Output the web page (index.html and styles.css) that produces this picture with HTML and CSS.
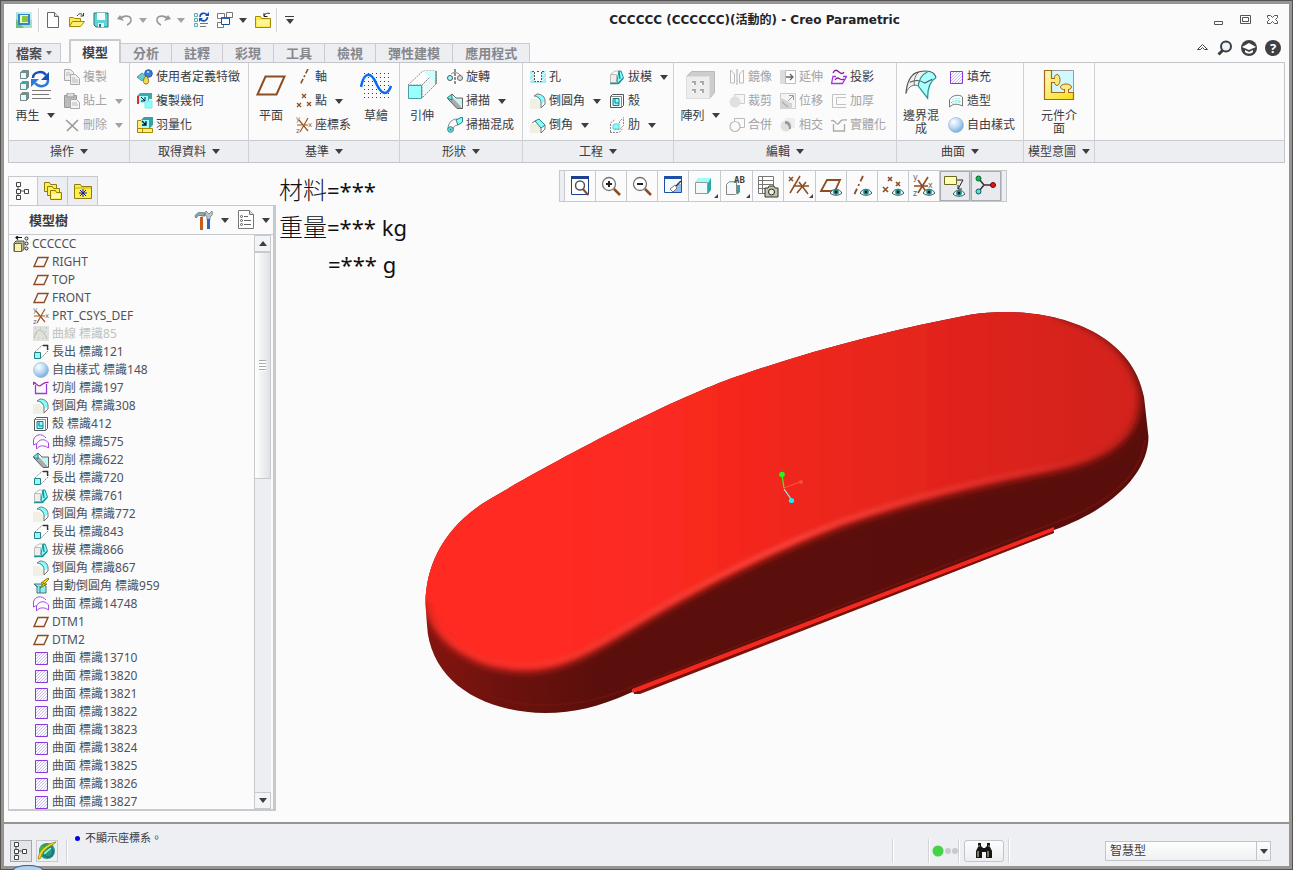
FILE: index.html
```html
<!DOCTYPE html>
<html lang="zh-Hant">
<head>
<meta charset="utf-8">
<title>CCCCCC - Creo Parametric</title>
<link rel="stylesheet" href="styles.css">
</head>
<body>
<svg class="defs" aria-hidden="true">
<defs>
<linearGradient id="gYellow" x1="0" y1="0" x2="1" y2="1"><stop offset="0" stop-color="#fff8c0"/><stop offset="1" stop-color="#f7de10"/></linearGradient>
<radialGradient id="gBall" cx=".35" cy=".3" r=".8"><stop offset="0" stop-color="#fff"/><stop offset=".5" stop-color="#b9d8f5"/><stop offset="1" stop-color="#6c9fd4"/></radialGradient>
<pattern id="hatch" width="3" height="3" patternUnits="userSpaceOnUse"><path d="M-1 1L1-1M0 3L3 0M2 4L4 2" stroke="#a9a4ee" stroke-width=".7"/></pattern>
<pattern id="dots" width="4" height="4" patternUnits="userSpaceOnUse"><rect width="1" height="1" fill="#1d3f90"/></pattern>

<symbol id="app" viewBox="0 0 18 18"><rect x="1" y="1" width="16" height="16" fill="#a8dccb"/><path d="M1 1h16v8z" fill="#c9ecf4"/><path d="M1 8v9h8z" fill="#74c26a"/><rect x="3" y="3" width="12" height="11" fill="#2f86c8"/><rect x="5" y="4" width="8" height="8" fill="#e8f8d0"/><rect x="7" y="5" width="6" height="6" fill="#8cc63c"/></symbol>
<symbol id="new" viewBox="0 0 16 16"><path d="M2.500.500h7l4 4v11h-11z" fill="#fff" stroke="#666"/><path d="M9.500.500v4h4" fill="#ddd" stroke="#666"/></symbol>
<symbol id="open" viewBox="0 0 16 16"><path d="M.500 14.500v-9h4l1 1h6v3" fill="#ffe94d" stroke="#a58a00"/><path d="M.500 14.500l3-5h12l-4 5z" fill="#fff27a" stroke="#a58a00"/><path d="M8 4c2-3 4-3 6-.500M11.500 4h3V1" fill="none" stroke="#333"/></symbol>
<symbol id="save" viewBox="0 0 16 16"><path d="M1 1h14v14H3l-2-2z" fill="#5cd5da" stroke="#26767c"/><path d="M4 1h8v7H4z" fill="#f8fcfc"/><path d="M5 11h6v4H5z" fill="#f2f2f2"/><path d="M6 12h2v3H6z" fill="#26767c"/></symbol>
<symbol id="undo" viewBox="0 0 16 16"><path d="M3 7c3-4 11-4 11 1 0 3-2 4-4 5" fill="none" stroke="#999" stroke-width="1.600"/><path d="M0 7l7 2-4-6z" fill="#999"/></symbol>
<symbol id="redo" viewBox="0 0 16 16"><path d="M13 7C10 3 2 3 2 8c0 3 2 4 4 5" fill="none" stroke="#999" stroke-width="1.600"/><path d="M16 7L9 9l4-6z" fill="#999"/></symbol>
<symbol id="regen16" viewBox="0 0 16 16"><path d="M1.500 1.500h3v3h-3zM1.500 6.500h3v3h-3zM1.500 11.500h3v3h-3z" fill="#cff" stroke="#6aa"/><path d="M7 5c0-4 5-5 7-2M14.500 5c0 4-5 5-7 2.500" fill="none" stroke="#1450b8" stroke-width="1.600"/><path d="M16 0v4h-4zM6 10V6h4z" fill="#1450b8"/><path d="M7 11.500h8M7 14.500h6" stroke="#777"/></symbol>
<symbol id="regen" viewBox="0 0 32 32"><g fill="#9ff" stroke="#777" stroke-width=".8"><path d="M1.500 3.500l2-2h6v6l-2 2h-6z" fill="#3aa"/><path d="M1.500 3.500h6v6h-6z" fill="#dff"/><path d="M1.500 14.500l2-2h6v6l-2 2h-6z" fill="#3aa"/><path d="M1.500 14.500h6v6h-6z" fill="#dff"/><path d="M1.500 25.500l2-2h6v6l-2 2h-6z" fill="#3aa"/><path d="M1.500 25.500h6v6h-6z" fill="#dff"/></g><path d="M14 9c0-6 9-8 13-3" fill="none" stroke="#1450b8" stroke-width="2.500"/><path d="M30 3v8h-8z" fill="#1450b8"/><path d="M29 11c0 7-9 8-13 3" fill="none" stroke="#2e78d8" stroke-width="2.500"/><path d="M12 18v-8h8z" fill="#2e78d8"/><path d="M13 21.500h19M13 25.500h17M13 29.500h19" stroke="#777"/></symbol>
<symbol id="wins" viewBox="0 0 16 16"><g fill="#fff" stroke="#777"><path d="M.500 1.500h7v5h-7zM9.500.500h6v5h-6zM.500 10.500h6v5h-6z"/></g><path d="M4.500 5.500h8v7h-8z" fill="#fff" stroke="#1c4a9a"/><path d="M4 5h9v2H4z" fill="#2b62b8"/></symbol>
<symbol id="closef" viewBox="0 0 16 16"><path d="M.500 15.500v-11h5l1 2h9v9z" fill="#fbea4c" stroke="#a58a00"/><path d="M2 8h12v6H2z" fill="#fff598"/><path d="M9 4c1-3 4-3 6-2.500M9 1v3.500h3.500" fill="none" stroke="#222"/></symbol>

<symbol id="copy" viewBox="0 0 16 16"><g fill="#eee" stroke="#aaa"><path d="M.500.500h6l3 3v8h-9z"/><path d="M6.500 5.500h5l4 4v6h-9z"/></g><path d="M2 4h4M2 6h4M8 9h3M8 11h6M8 13h6" stroke="#bbb"/></symbol>
<symbol id="paste" viewBox="0 0 16 16"><path d="M.500 2.500h12v12H.500z" fill="#bbb" stroke="#999"/><path d="M3 0h7v4H3z" fill="#ddd" stroke="#999"/><path d="M6.500 6.500h6l3 3v6h-9z" fill="#f4f4f4" stroke="#aaa"/><path d="M8 10h5M8 12h6" stroke="#bbb"/></symbol>
<symbol id="del" viewBox="0 0 16 16"><path d="M2 3l12 11M14 3L3 14" stroke="#999" stroke-width="1.600"/></symbol>
<symbol id="udf" viewBox="0 0 16 16"><path d="M0 8l5-4 4 3-4 5z" fill="#6cc" stroke="#287f82" stroke-width=".7"/><circle cx="11.500" cy="4.500" r="3.800" fill="#3c7ee0" stroke="#2457a6"/><path d="M9 7c4 4 3 8 0 8s-4-4 0-8z" fill="#f4d84c" stroke="#8f7414"/><circle cx="11" cy="3" r="1" fill="#cfe4ff"/></symbol>
<symbol id="copyg" viewBox="0 0 16 16"><path d="M0 3l3-3h12v6h-3v6H9V4z" fill="#38aab0"/><path d="M2 3h9v7H2z" fill="#9ff"/><path d="M0 3h2v8H0z" fill="#d03030"/><path d="M4 4l4 4m0-4v4H4" fill="none" stroke="#113"/><path d="M8 8h7v7H8z" fill="#8ff" stroke="#9adfe4"/></symbol>
<symbol id="shrink" viewBox="0 0 16 16"><path d="M.500 3.500h5v12h-5zM.500 11.500h15v4H.500z" fill="#ffec7a" stroke="#a58a00"/><path d="M4 3l3-3h9v8l-3 3H4z" fill="#38a0a5"/><path d="M4 3h8v8H4z" fill="#9ff"/><path d="M5 4l4 4m0-4v4H5" fill="none" stroke="#113" stroke-width="1.300"/></symbol>
<symbol id="plane" viewBox="0 0 16 16"><path d="M5 3.500h10l-4 9H1z" fill="none" stroke="#8d4c22" stroke-width="1.400"/></symbol>
<symbol id="plane32" viewBox="0 0 32 32"><path d="M10.500 7.500h19l-8 18h-19z" fill="none" stroke="#8d4c22" stroke-width="2"/></symbol>
<symbol id="axis" viewBox="0 0 16 16"><path d="M12 0L4 16" stroke="#8d4c22" stroke-width="1.600" stroke-dasharray="5 2 2 2"/></symbol>
<symbol id="pts" viewBox="0 0 16 16"><path d="M6 1l4 4m0-4L6 5M1 10l4 4m0-4l-4 4M11 9l4 4m0-4l-4 4" stroke="#8d4c22" stroke-width="1.200"/></symbol>
<symbol id="csys" viewBox="0 0 16 16"><path d="M1 8h11M3 3l9 11M12 1L4 15" stroke="#a3541f" stroke-width="1.200"/><text class="axisname" x="0" y="4">y</text><text class="axisname" x="12" y="10">x</text><text class="axisname" x="0" y="16">z</text></symbol>
<symbol id="sketch" viewBox="0 0 32 32"><rect x="2" y="2" width="28" height="28" fill="url(#dots)"/><path d="M1 18C4 2 11 3 16 14S27 28 31 17" fill="none" stroke="#0a6cf0" stroke-width="2.500"/></symbol>
<symbol id="extr" viewBox="0 0 32 32"><path d="M2 16L17 2h13L16 16z" fill="#fff" stroke="#888" stroke-dasharray="2 1"/><path d="M30 2v13L16 29V16z" fill="#eef8f8" stroke="#888" stroke-dasharray="2 1"/><path d="M17 2h13v13l-6-6z" fill="#cff"/><path d="M30 2v13" stroke="#555"/><path d="M2.500 16.500h13v13h-13z" fill="#9ff" stroke="#4d9ea0"/></symbol>
<symbol id="extr16" viewBox="0 0 16 16"><path d="M2 8l7-6.500h6V7l-7 7" fill="#fff" stroke="#888" stroke-dasharray="2 1"/><path d="M10 1.500h4.500V6" fill="none" stroke="#333" stroke-width="1.300"/><path d="M1.500 8.500h6v6h-6z" fill="#8ff" stroke="#287f82"/></symbol>
<symbol id="revolve" viewBox="0 0 16 16"><path d="M8 0v16" stroke="#222" stroke-dasharray="3 1"/><circle cx="3" cy="9" r="2.500" fill="#9ff" stroke="#555"/><circle cx="13" cy="9" r="2.500" fill="#dcdcdc" stroke="#666"/><path d="M4 5c2-2 7-2 9 1" fill="none" stroke="#888"/></symbol>
<symbol id="sweep" viewBox="0 0 16 16"><path d="M7 5h8.500v9L12 15z" fill="#c4f4f4"/><path d="M2 7l8 8.500h5.500L6 5z" fill="#aaa"/><path d="M0 5l5-4v6z" fill="#6ee" stroke="#287f82"/><path d="M5 1l4 4h6.500v10.500H10L1 6" fill="none" stroke="#555" stroke-width=".9"/></symbol>
<symbol id="swblend" viewBox="0 0 16 16"><path d="M1 12c0-6 4-10 9-10M6 13c0-3 2-5 5-5" fill="none" stroke="#888"/><circle cx="3.500" cy="12.500" r="2.800" fill="#6ee" stroke="#287f82"/><circle cx="3.500" cy="12.500" r="1" fill="#287f82"/><path d="M9 3l5-2.500h1.500V5L11 8z" fill="#8ff" stroke="#287f82"/></symbol>
<symbol id="hole" viewBox="0 0 16 16"><path d="M0 2h4v11h8V2h4v12H0z" fill="#a6ecf2"/><path d="M0 7l4-4M0 12l5-5M12 12l4-4M12 7l4-4" stroke="#fff"/><path d="M2 2.500h2.500v10h7v-10H14M7 2.500h2" fill="none" stroke="#555" stroke-dasharray="2 1"/></symbol>
<symbol id="round" viewBox="0 0 16 16"><path d="M0 6h7l4 5v5H0z" fill="#f0f0e2"/><path d="M4 3l4-2c4 0 7 3 7 7l-4 3c0-4-3-7-7-8z" fill="#8ff"/><path d="M4 3c4 0 7 3 7 7v5l4-4V8c0-4-3-7-8-7z" fill="none" stroke="#777"/></symbol>
<symbol id="chamf" viewBox="0 0 16 16"><path d="M0 7h6l5 4v5H0z" fill="#f0f0e2"/><path d="M5 4l4-2 6 6-4 3z" fill="#8ff" stroke="#287f82"/><path d="M2 6l3-2M11 11v5l4-4V8" fill="none" stroke="#777"/></symbol>
<symbol id="draft" viewBox="0 0 16 16"><path d="M1.500 5.500h6v8h-6z" fill="#eee" stroke="#bbb"/><path d="M2 5l4-3h4" fill="none" stroke="#bbb"/><path d="M8 12l2-10h2l2.500 7-5 6z" fill="#8ff" stroke="#209296"/><path d="M1 14.500h8l5-5M10 2l1 8" stroke="#209296" stroke-width="1.400" fill="none"/></symbol>
<symbol id="shell" viewBox="0 0 16 16"><path d="M1.500 3.500l2-2h11v11l-2 2h-11z" fill="#fff" stroke="#555"/><path d="M1.500 3.500h11v11" fill="none" stroke="#888"/><path d="M4 5.500h6v7H4z" fill="#8ff" stroke="#167b7e"/><path d="M6 6v4h4" fill="none" stroke="#167b7e"/></symbol>
<symbol id="rib" viewBox="0 0 16 16"><path d="M1.500 15V6l4-3M5.500 12.500h5l4-4V.500l-4 4v3M1 15.500h9l4-4" fill="none" stroke="#888" stroke-dasharray="2 1"/><path d="M4 8l2-1h4v5H4z" fill="#8ff" stroke="#6cc"/></symbol>
<symbol id="pattern" viewBox="0 0 32 32"><path d="M2.500 7.500l5-5h23v21l-5 6h-23z" fill="#cdcdcd" stroke="#b8b8b8"/><path d="M2.500 7.500h23v22h-23z" fill="#ededed" stroke="#ddd"/><g fill="#aaa"><path d="M8 12h4v4H8zM16 12h4v4h-4zM8 20h4v4H8zM16 20h4v4h-4z"/></g><g fill="#fff"><path d="M8 14h2v2H8zM16 14h2v2h-2zM8 22h2v2H8zM16 22h2v2h-2z"/></g></symbol>
<symbol id="mirror" viewBox="0 0 16 16"><path d="M8 0v16" stroke="#aaa"/><path d="M5.500 5v9h-4V1zM10.500 5v9h4V1z" fill="none" stroke="#bbb"/></symbol>
<symbol id="extend" viewBox="0 0 16 16"><path d="M0 1h6v14H0z" fill="#ddd"/><path d="M5.500 1.500h10v13h-10z" fill="#fff" stroke="#bbb"/><path d="M6 8h7M10 5l3 3-3 3" fill="none" stroke="#666" stroke-width="1.300"/></symbol>
<symbol id="project" viewBox="0 0 16 16"><path d="M2 4c2-4 4-3 6-1s4 2 5 0" fill="none" stroke="#8a1f9a" stroke-width="1.300"/><path d="M4 11c2-3 3-2 5-1s3 1 4 0" fill="none" stroke="#8a1f9a" stroke-width="1.300"/><path d="M5 7.500H2l-1.500 7h11l4-7H12" fill="none" stroke="#a038e8" stroke-width="1.300"/></symbol>
<symbol id="trim" viewBox="0 0 16 16"><path d="M5.500 1.500h10v9h-10z" fill="#f6f6f6" stroke="#ccc"/><circle cx="6" cy="9" r="5.500" fill="#e0e0e0"/></symbol>
<symbol id="offset" viewBox="0 0 16 16"><path d="M.500.500h15v15H.500z" fill="#f4f4f4" stroke="#ccc"/><path d="M0 6c5-2 6 4 12 4v6H0z" fill="#d4d4d4"/><path d="M8 8l5-5M9 2.500h4.500V7M2 9l6 5" stroke="#999" fill="none"/></symbol>
<symbol id="thicken" viewBox="0 0 16 16"><path d="M15 1.500H1.500v13H15M15 4.500H5.500v7H15" fill="none" stroke="#c2c2c2"/></symbol>
<symbol id="merge" viewBox="0 0 16 16"><path d="M5.500 1.500h10v9h-5M5.500 1.500V4" fill="none" stroke="#bbb"/><circle cx="6" cy="9.500" r="5" fill="none" stroke="#bbb" stroke-width="1.200"/></symbol>
<symbol id="inter" viewBox="0 0 16 16"><path d="M5 1h10v10H5z" fill="#eee"/><circle cx="6" cy="9" r="5.500" fill="#e0e0e0"/><path d="M5 4c5 0 6 3 6 8H9c0-3-1-5-4-5z" fill="#999"/></symbol>
<symbol id="solid" viewBox="0 0 16 16"><path d="M2.500 7v7h11V7M0 4c4-3 5 6 8 2s4-3 8-3" fill="none" stroke="#aaa" stroke-width="1.300"/></symbol>
<symbol id="bblend" viewBox="0 0 34 34"><path d="M1 26C2 13 7 4 15 3l9-1c-8 3-11 12-7 15C10 14 4 17 1 26z" fill="#f0f0f0"/><path d="M24 3c5-1 8 1 9 6-7 4-9 12-9 22l-9-14c0-6 4-11 9-14z" fill="#aff"/><path d="M1 26C2 13 7 4 15 3c8-2 16-1 18 6M5 14c7-3 12-2 16 1l8-4" fill="none" stroke="#555" stroke-width="1.200"/><path d="M1 26c3-9 9-10 14-8M15 3c-4 3-6 9-5 15" fill="none" stroke="#666"/><path d="M33 9c-7 4-9 12-9 22L14 18C15 10 18 6 24 3" fill="none" stroke="#209296" stroke-width="1.300"/></symbol>
<symbol id="fill" viewBox="0 0 16 16"><path d="M2.500 2.500h12v12h-12z" fill="url(#hatch)" stroke="#8c38d8"/></symbol>
<symbol id="style" viewBox="0 0 16 16"><path d="M1.500 14V7c2-5 10-6 13-3v9c-4-2-9-3-13 1z" fill="#f4fefe" stroke="#777"/><path d="M5 6v6M8 5v6M11 5v6M3 10c4-3 7-2 10-1" stroke="#6fd6d8" stroke-dasharray="1 1" fill="none"/></symbol>
<symbol id="ball" viewBox="0 0 16 16"><circle cx="8" cy="8" r="7.500" fill="url(#gBall)" stroke="#9bb9d8" stroke-width=".7"/></symbol>
<symbol id="puzzle" viewBox="0 0 32 32"><path d="M8.500 1.500h22v22h-22z" fill="#cff8ff" stroke="#999"/><path d="M1.500 1.500h7v22h22v7h-29z" fill="url(#gYellow)" stroke="#a3681c" stroke-width="1.200"/><g fill="#fbe97a" stroke="#a3681c"><ellipse cx="14" cy="11" rx="3" ry="5.500"/><ellipse cx="23" cy="18" rx="5.500" ry="3"/><path d="M8 9.500h4M8 13.500h4M21.500 20v4M25.500 20v4"/></g><path d="M7 10h6v3H7zM22 18h3v7h-3z" fill="#fbe97a"/></symbol>

<symbol id="tree" viewBox="0 0 16 18"><path d="M3 5v8M5 9h5" stroke="#555"/><path d="M1.500.500h4v4h-4zM1.500 7.500h4v4h-4zM1.500 13.500h4v4h-4zM9.500 7.500h4v4h-4z" fill="#fff" stroke="#444"/></symbol>
<symbol id="folders" viewBox="0 0 18 18"><g fill="#fff04a" stroke="#8e7c10"><path d="M.500 9.500v-9h5l1 2h6v7z"/><path d="M3.500 13.500v-9h5l1 2h6v7z"/><path d="M6.500 17.500v-9h5l1 2h5v7z"/></g><path d="M8 12h8v4H8z" fill="#fffab0"/></symbol>
<symbol id="favf" viewBox="0 0 18 18"><path d="M.500 16.500v-14h6l1 2h10v12z" fill="#fdf04c" stroke="#8e7c10"/><path d="M1 6h16" stroke="#c8ae10"/><path d="M9 7v8M5 11h8M6 8l6 6M12 8l-6 6" stroke="#111aa8"/></symbol>
<symbol id="tools" viewBox="0 0 20 20"><path d="M1 6c2-4 5-4 10-3v3H8C5 5 4 5 2 8z" fill="#93a8ac" stroke="#495b60" stroke-width=".7"/><path d="M6 7h3v13H6z" fill="#c4601c"/><path d="M12 1l3 3 3-3c1 3 0 5-2 6v3h-3V7c-2-2-2-4-1-6z" fill="#b7c7ce" stroke="#5c7078" stroke-width=".7"/><path d="M13 9h3v10h-3z" fill="#2f66c8"/></symbol>
<symbol id="listset" viewBox="0 0 18 20"><path d="M1.500.500h11l4 4v14h-15z" fill="#fff" stroke="#777"/><path d="M12.500.500v4h4" fill="#ddd" stroke="#777"/><path d="M7 6.500h4M7 10.500h7M7 14.500h7" stroke="#666"/><g fill="none" stroke="#555"><circle cx="4.500" cy="6.500" r="1"/><circle cx="4.500" cy="10.500" r="1"/><circle cx="4.500" cy="14.500" r="1"/></g></symbol>
<symbol id="part" viewBox="0 0 16 16"><path d="M1 7l2-2h8v8l-2 2.500H1z" fill="#b9b98a" stroke="#555"/><path d="M1.500 7.500h7v8h-7z" fill="#f7f2b4" stroke="#6b6b40"/><path d="M9 1.500H3M5 0L3 1.500l2 2" stroke="#111" fill="none" stroke-width="1.200"/><g fill="none" stroke="#222"><circle cx="13.500" cy="2.500" r="1.500"/><circle cx="13.500" cy="7.500" r="1.500"/><circle cx="13.500" cy="12.500" r="1.500"/></g></symbol>
<symbol id="curve" viewBox="0 0 16 16"><path d="M0 0h16v15H0z" fill="#e0e0e0"/><path d="M1 12C4 0 10 3 14 13" stroke="#b5bd9c" fill="none"/><path d="M2 2h1M7 2h1M13 2h1M3 7h1M12 6h1M5 12h1M10 12h1" stroke="#aebf8c"/></symbol>
<symbol id="cut" viewBox="0 0 16 16"><path d="M.500 5V2.500c3 0 4 5 7 3s4-4 8-3" fill="none" stroke="#b020a8" stroke-width="1.300"/><path d="M2.500 5v8.500h11V4" fill="none" stroke="#963ce0" stroke-width="1.300"/></symbol>
<symbol id="surf" viewBox="0 0 16 16"><path d="M.500 11V6C2 0 9-1 13 4M.500 11l3-1.500M3.500 15v-5C6 5 12 4 15.500 9v5c-4-3-9-3-12 1z" fill="none" stroke="#a848ea"/></symbol>
<symbol id="auto" viewBox="0 0 16 16"><path d="M1 6h7l5 2v7H4V9z" fill="#8ee" stroke="#48777a"/><path d="M7 8v7M1 6l4 3" stroke="#48777a"/><path d="M15 0L8 5h3L7 10l7-4h-3l5-5z" fill="#ffea00" stroke="#665c00" stroke-width=".8"/></symbol>
<symbol id="web" viewBox="0 0 20 20"><circle cx="10" cy="10" r="8" fill="#2b9a6c"/><path d="M4 5c4 0 8 2 5 6-3 0-3 6-5 3-3-3-2-6 0-9z" fill="#39b852"/><circle cx="11" cy="11" r="5" fill="none" stroke="#1a6ea0" stroke-width="2"/><path d="M1 18C2 9 9 3 19 1 17 4 14 4 12 6 7 8 5 13 3 18z" fill="#f4dc20" stroke="#8a7a10" stroke-width=".7"/><path d="M7 13l7-6" stroke="#9fe" stroke-width="1.500"/></symbol>
<symbol id="eye" viewBox="0 0 12 8"><path d="M0 5c3-5 9-5 12 0-3 3-9 3-12 0z" fill="#e9f5f5" stroke="#34575a"/><circle cx="6" cy="4" r="2.800" fill="#178c88"/><circle cx="6" cy="4" r="1.200" fill="#113"/></symbol>

<linearGradient id="face" gradientUnits="userSpaceOnUse" x1="560" y1="480" x2="1110" y2="480"><stop offset="0" stop-color="#ff2c24"/><stop offset=".25" stop-color="#f8291f"/><stop offset=".5" stop-color="#ec261d"/><stop offset=".75" stop-color="#df241c"/><stop offset="1" stop-color="#d4211a"/></linearGradient>
<linearGradient id="side" gradientUnits="userSpaceOnUse" x1="425" y1="0" x2="1150" y2="0"><stop offset="0" stop-color="#84150f"/><stop offset=".1" stop-color="#6e120e"/><stop offset=".24" stop-color="#5a0f0c"/><stop offset="1" stop-color="#5a0e0b"/></linearGradient>
<linearGradient id="rim" gradientUnits="userSpaceOnUse" x1="425" y1="0" x2="1150" y2="0"><stop offset="0" stop-color="#ff4038" stop-opacity=".3"/><stop offset=".5" stop-color="#ff463e"/><stop offset=".85" stop-color="#e2302a" stop-opacity=".8"/><stop offset="1" stop-color="#d8241c" stop-opacity="0"/></linearGradient>
<filter id="soft" x="-5%" y="-5%" width="110%" height="110%"><feGaussianBlur stdDeviation="4"/></filter>
<filter id="soft2" x="-5%" y="-5%" width="110%" height="110%"><feGaussianBlur stdDeviation="2"/></filter>
<clipPath id="hull"><path d="M425.500 604C425.500 562 447 524 490 499C580 446 690 391 747 373C820 348 900 328 970 314.700C1040 304 1130 325 1144 397L1148.500 437C1148 475 1110 510 1054 530L630 693C598 707 575 713 545 713C480 712 430 680 427 625Z"/></clipPath>
</defs>
</svg>

<div class="window">
  <header class="titlebar">
    <div class="quick">
      <svg class="i18"><use href="#app"/></svg><span class="vsep"></span>
      <button class="qb" aria-label="新建"><svg class="i16"><use href="#new"/></svg></button>
      <button class="qb" aria-label="開啟"><svg class="i16"><use href="#open"/></svg></button>
      <button class="qb" aria-label="儲存"><svg class="i16"><use href="#save"/></svg></button>
      <button class="qb" aria-label="退回"><svg class="i16"><use href="#undo"/></svg><i class="caret dim"></i></button>
      <button class="qb" aria-label="取消退回"><svg class="i16"><use href="#redo"/></svg><i class="caret dim"></i></button>
      <button class="qb" aria-label="再生"><svg class="i16"><use href="#regen16"/></svg></button>
      <button class="qb" aria-label="視窗"><svg class="i16"><use href="#wins"/></svg><i class="caret"></i></button>
      <button class="qb" aria-label="關閉"><svg class="i16"><use href="#closef"/></svg></button><span class="vsep"></span>
      <button class="qb more" aria-label="自訂"><i class="caret"></i></button>
    </div>
    <h1>CCCCCC (CCCCCC)(活動的) - Creo Parametric</h1>
    <div class="winbtns">
      <button aria-label="最小化"><svg width="12" height="12"><path d="M1.500 7.500h8v3h-8z" fill="#fff" stroke="#555"/></svg></button>
      <button aria-label="最大化"><svg width="12" height="12"><path d="M.500 1.500h10v8H.500zM2.500 3.500h6v4h-6z" fill="#fff" stroke="#555"/></svg></button>
      <button aria-label="關閉視窗"><svg width="12" height="12"><path d="M.500 1.500h3l2 2 2-2h3v2l-2 2 2 2v2h-3l-2-2-2 2h-3v-2l2-2-2-2z" fill="#fff" stroke="#555"/></svg></button>
    </div>
  </header>

  <nav class="tabs">
    <button class="tab file">檔案<i class="caret"></i></button>
    <button class="tab active">模型</button>
    <button class="tab">分析</button><button class="tab">註釋</button><button class="tab">彩現</button><button class="tab">工具</button><button class="tab">檢視</button><button class="tab">彈性建模</button><button class="tab">應用程式</button>
    <div class="help">
      <button aria-label="收合"><svg width="12" height="12"><path d="M.500 7.500l5-5 5 5h-3l-2-2-2 2z" fill="#fff" stroke="#444"/></svg></button>
      <button aria-label="搜尋"><svg width="16" height="16"><circle cx="9" cy="6.500" r="5" fill="#eef4fa" stroke="#3c3e44" stroke-width="2"/><path d="M5.500 10.500L1.500 14.500" stroke="#3c3e44" stroke-width="3"/></svg></button>
      <button aria-label="學習"><svg width="16" height="16"><circle cx="8" cy="8" r="8" fill="#3f4045"/><path d="M1 7l7-4 7 4-7 3z" fill="#fff"/><path d="M4 10v2c2 2 6 2 8 0v-2l-4 2z" fill="#fff"/></svg></button>
      <button class="ask" aria-label="說明">?</button>
    </div>
  </nav>

  <section class="ribbon">
    <div class="group g-op">
      <div class="tools">
        <button class="big wide"><svg class="i32"><use href="#regen"/></svg><span>再生<i class="caret"></i></span></button>
        <div class="col"><button class="sm" disabled><svg class="i16"><use href="#copy"/></svg>複製</button><button class="sm" disabled><svg class="i16"><use href="#paste"/></svg>貼上<i class="caret"></i></button><button class="sm" disabled><svg class="i16"><use href="#del"/></svg>刪除<i class="caret"></i></button></div>
      </div>
      <button class="gname">操作<i class="caret"></i></button>
    </div>
    <div class="group g-data">
      <div class="tools inset">
        <div class="col"><button class="sm"><svg class="i16"><use href="#udf"/></svg>使用者定義特徵</button><button class="sm"><svg class="i16"><use href="#copyg"/></svg>複製幾何</button><button class="sm"><svg class="i16"><use href="#shrink"/></svg>羽量化</button></div>
      </div>
      <button class="gname">取得資料<i class="caret"></i></button>
    </div>
    <div class="group g-datum">
      <div class="tools">
        <button class="big"><svg class="i32"><use href="#plane32"/></svg><span>平面</span></button>
        <div class="col"><button class="sm"><svg class="i16"><use href="#axis"/></svg>軸</button><button class="sm"><svg class="i16"><use href="#pts"/></svg>點<i class="caret"></i></button><button class="sm"><svg class="i16"><use href="#csys"/></svg>座標系</button></div>
        <button class="big"><svg class="i32"><use href="#sketch"/></svg><span>草繪</span></button>
      </div>
      <button class="gname">基準<i class="caret"></i></button>
    </div>
    <div class="group g-shape">
      <div class="tools">
        <button class="big"><svg class="i32"><use href="#extr"/></svg><span>引伸</span></button>
        <div class="col"><button class="sm"><svg class="i16"><use href="#revolve"/></svg>旋轉</button><button class="sm"><svg class="i16"><use href="#sweep"/></svg>掃描<i class="caret"></i></button><button class="sm"><svg class="i16"><use href="#swblend"/></svg>掃描混成</button></div>
      </div>
      <button class="gname">形狀<i class="caret"></i></button>
    </div>
    <div class="group g-eng">
      <div class="tools inset">
        <div class="col"><button class="sm"><svg class="i16"><use href="#hole"/></svg>孔</button><button class="sm"><svg class="i16"><use href="#round"/></svg>倒圓角<i class="caret"></i></button><button class="sm"><svg class="i16"><use href="#chamf"/></svg>倒角<i class="caret"></i></button></div>
        <div class="col next"><button class="sm"><svg class="i16"><use href="#draft"/></svg>拔模<i class="caret"></i></button><button class="sm"><svg class="i16"><use href="#shell"/></svg>殼</button><button class="sm"><svg class="i16"><use href="#rib"/></svg>肋<i class="caret"></i></button></div>
      </div>
      <button class="gname">工程<i class="caret"></i></button>
    </div>
    <div class="group g-edit">
      <div class="tools">
        <button class="big wide"><svg class="i32"><use href="#pattern"/></svg><span>陣列<i class="caret"></i></span></button>
        <div class="col"><button class="sm" disabled><svg class="i16"><use href="#mirror"/></svg>鏡像</button><button class="sm" disabled><svg class="i16"><use href="#trim"/></svg>裁剪</button><button class="sm" disabled><svg class="i16"><use href="#merge"/></svg>合併</button></div>
        <div class="col next"><button class="sm" disabled><svg class="i16"><use href="#extend"/></svg>延伸</button><button class="sm" disabled><svg class="i16"><use href="#offset"/></svg>位移</button><button class="sm" disabled><svg class="i16"><use href="#inter"/></svg>相交</button></div>
        <div class="col next"><button class="sm"><svg class="i16"><use href="#project"/></svg>投影</button><button class="sm" disabled><svg class="i16"><use href="#thicken"/></svg>加厚</button><button class="sm" disabled><svg class="i16"><use href="#solid"/></svg>實體化</button></div>
      </div>
      <button class="gname">編輯<i class="caret"></i></button>
    </div>
    <div class="group g-surf">
      <div class="tools">
        <button class="big mid"><svg class="i32"><use href="#bblend"/></svg><span>邊界混<br>成</span></button>
        <div class="col"><button class="sm"><svg class="i16"><use href="#fill"/></svg>填充</button><button class="sm"><svg class="i16"><use href="#style"/></svg>造型</button><button class="sm"><svg class="i16"><use href="#ball"/></svg>自由樣式</button></div>
      </div>
      <button class="gname">曲面<i class="caret"></i></button>
    </div>
    <div class="group g-intent">
      <div class="tools center">
        <button class="big"><svg class="i32"><use href="#puzzle"/></svg><span>元件介<br>面</span></button>
      </div>
      <button class="gname">模型意圖<i class="caret"></i></button>
    </div>
    <div class="group rest"><div class="tools"></div><div class="gname"></div></div>
  </section>

  <main class="main">
    <aside class="side">
      <div class="sidetabs">
        <button class="active" aria-label="模型樹"><svg width="16" height="18"><use href="#tree"/></svg></button>
        <button aria-label="資料夾"><svg width="18" height="18"><use href="#folders"/></svg></button>
        <button aria-label="我的最愛"><svg width="18" height="18"><use href="#favf"/></svg></button>
      </div>
      <div class="panel">
        <div class="panelhead"><h2>模型樹</h2>
          <button aria-label="設定"><svg width="20" height="20"><use href="#tools"/></svg><i class="caret"></i></button>
          <button aria-label="顯示"><svg width="18" height="20"><use href="#listset"/></svg><i class="caret"></i></button>
        </div>
        <div class="treebox">
          <ul class="tree">
            <li class="root"><svg class="i16"><use href="#part"/></svg>CCCCCC</li>
            <li><svg class="i16"><use href="#plane"/></svg>RIGHT</li>
            <li><svg class="i16"><use href="#plane"/></svg>TOP</li>
            <li><svg class="i16"><use href="#plane"/></svg>FRONT</li>
            <li><svg class="i16"><use href="#csys"/></svg>PRT_CSYS_DEF</li>
            <li class="dimrow"><svg class="i16"><use href="#curve"/></svg>曲線 標識85</li>
            <li><svg class="i16"><use href="#extr16"/></svg>長出 標識121</li>
            <li><svg class="i16"><use href="#ball"/></svg>自由樣式 標識148</li>
            <li><svg class="i16"><use href="#cut"/></svg>切削 標識197</li>
            <li><svg class="i16"><use href="#round"/></svg>倒圓角 標識308</li>
            <li><svg class="i16"><use href="#shell"/></svg>殼 標識412</li>
            <li><svg class="i16"><use href="#surf"/></svg>曲線 標識575</li>
            <li><svg class="i16"><use href="#sweep"/></svg>切削 標識622</li>
            <li><svg class="i16"><use href="#extr16"/></svg>長出 標識720</li>
            <li><svg class="i16"><use href="#draft"/></svg>拔模 標識761</li>
            <li><svg class="i16"><use href="#round"/></svg>倒圓角 標識772</li>
            <li><svg class="i16"><use href="#extr16"/></svg>長出 標識843</li>
            <li><svg class="i16"><use href="#draft"/></svg>拔模 標識866</li>
            <li><svg class="i16"><use href="#round"/></svg>倒圓角 標識867</li>
            <li><svg class="i16"><use href="#auto"/></svg>自動倒圓角 標識959</li>
            <li><svg class="i16"><use href="#surf"/></svg>曲面 標識14748</li>
            <li><svg class="i16"><use href="#plane"/></svg>DTM1</li>
            <li><svg class="i16"><use href="#plane"/></svg>DTM2</li>
            <li><svg class="i16"><use href="#fill"/></svg>曲面 標識13710</li>
            <li><svg class="i16"><use href="#fill"/></svg>曲面 標識13820</li>
            <li><svg class="i16"><use href="#fill"/></svg>曲面 標識13821</li>
            <li><svg class="i16"><use href="#fill"/></svg>曲面 標識13822</li>
            <li><svg class="i16"><use href="#fill"/></svg>曲面 標識13823</li>
            <li><svg class="i16"><use href="#fill"/></svg>曲面 標識13824</li>
            <li><svg class="i16"><use href="#fill"/></svg>曲面 標識13825</li>
            <li><svg class="i16"><use href="#fill"/></svg>曲面 標識13826</li>
            <li><svg class="i16"><use href="#fill"/></svg>曲面 標識13827</li>
          </ul>
          <div class="scroll">
            <button aria-label="向上"><i class="caret up"></i></button>
            <div class="track"><div class="thumb"><i></i></div></div>
            <button aria-label="向下"><i class="caret"></i></button>
          </div>
        </div>
      </div>
    </aside>

    <section class="canvas">
      <div class="canvastop">
        <div class="notes"><p>材料<span>=***</span></p><p>重量<span>=*** kg</span></p><p class="ind"><span>=*** g</span></p></div>
        <div class="viewbar">
          <button aria-label="重新調整"><svg class="i30"><path d="M6.500 6.500h17v17h-17z" fill="#fff" stroke="#1d3f90"/><path d="M6 5h18v3H6z" fill="#1d3f90"/><circle cx="15" cy="14.500" r="4.500" fill="#fff" stroke="#555" stroke-width="1.500"/><path d="M18 18l5 6" stroke="#8d4c22" stroke-width="2"/></svg></button>
          <button aria-label="放大"><svg class="i30"><circle cx="13" cy="13" r="6.500" fill="#fff" stroke="#777" stroke-width="1.300"/><path d="M10 13h6M13 10v6" stroke="#222" stroke-width="2"/><path d="M18 18l6 6" stroke="#8d4c22" stroke-width="2.500"/></svg></button>
          <button aria-label="縮小"><svg class="i30"><circle cx="13" cy="13" r="6.500" fill="#fff" stroke="#777" stroke-width="1.300"/><path d="M10 13h6" stroke="#222" stroke-width="2"/><path d="M18 18l6 6" stroke="#8d4c22" stroke-width="2.500"/></svg></button>
          <button aria-label="重繪"><svg class="i30"><path d="M6.500 6.500h17v15h-17z" fill="#f4f9ff" stroke="#1d4fa8"/><path d="M6 5h18v3H6z" fill="#1d4fa8"/><path d="M14 21l6-8h3v8z" fill="#8fbcf0"/><path d="M12 18l5-4 2 3-4 4z" fill="#fff" stroke="#777"/><path d="M18 15l5-5" stroke="#333" stroke-width="1.500"/></svg></button>
          <button class="drop" aria-label="顯示樣式"><svg class="i30"><path d="M6 12l4-5h12v12l-3 4H6z" fill="#2ca6aa"/><path d="M6 12l4-5h12l-3 5z" fill="#9ff"/><path d="M6.500 11.500h12v11h-12z" fill="#f1fafa" stroke="#999"/></svg></button>
          <button class="drop" aria-label="已儲存方位"><svg class="i30"><path d="M5.500 13.500l3-3h7v12l-1 1h-9z" fill="#f8f8f8" stroke="#888"/><path d="M8 11h7" stroke="#5dd"/><path d="M16 14h3v7l-3 3z" fill="#2ca6aa"/><text x="13" y="12" class="ab">AB</text></svg></button>
          <button aria-label="視圖管理員"><svg class="i30"><path d="M5.500 5.500h15v17h-15zM5 9.500h16M5 13.500h16M5 17.500h9M9.500 6v17" fill="#fff" stroke="#777"/><path d="M12 17h3l1-2h5l1 2h3v9H12z" fill="#c6c4a6" stroke="#333"/><circle cx="18.500" cy="21" r="3" fill="#eee" stroke="#222"/></svg></button>
          <button class="drop" aria-label="基準顯示"><svg class="i30"><path d="M5 6l4 4m0-4l-4 4M16 5L6 22M9 15h16M13 22l9-11M15 11l9 12" stroke="#8d4c22" stroke-width="1.500"/></svg></button>
          <button aria-label="平面顯示"><svg class="i30"><path d="M11 9h13l-5 11H5z" fill="none" stroke="#8d4c22" stroke-width="1.800"/><use href="#eye" x="14" y="17" width="12" height="8"/></svg></button>
          <button aria-label="軸顯示"><svg class="i30"><path d="M16 5L7 24" stroke="#8d4c22" stroke-width="1.800" stroke-dasharray="6 3 2 3"/><use href="#eye" x="13" y="17" width="12" height="8"/></svg></button>
          <button aria-label="點顯示"><svg class="i30"><path d="M10 6l4 4m0-4l-4 4M5 16l5 5m0-5l-5 5M18 11l4 4m0-4l-4 4" stroke="#8d4c22" stroke-width="1.600"/><use href="#eye" x="14" y="17" width="12" height="8"/></svg></button>
          <button aria-label="座標系顯示"><svg class="i30"><path d="M5 15h14M9 9l9 13M19 6L9 22" stroke="#8d4c22" stroke-width="1.600"/><text class="axisname big" x="4" y="9">y</text><text class="axisname big" x="19" y="17">x</text><text class="axisname big" x="4" y="25">z</text><use href="#eye" x="14" y="17" width="12" height="8"/></svg></button>
          <button class="on" aria-label="註解顯示"><svg class="i30"><path d="M4.500 5.500h12v8h-12z" fill="#ffffb8" stroke="#6b6b20"/><path d="M17 9h6l-5 9M18 14v4h4" fill="none" stroke="#222"/><use href="#eye" x="13" y="18" width="12" height="8"/></svg></button>
          <button class="on" aria-label="旋轉中心"><svg class="i30"><path d="M8 8l5 6M13 14h9M13 14l-5 6" stroke="#333" stroke-width="1.500"/><circle cx="7.500" cy="7.500" r="2.500" fill="#1fb43c" stroke="#064"/><circle cx="22" cy="14" r="2.500" fill="#e01818" stroke="#700"/><circle cx="7.500" cy="20.500" r="2.500" fill="#50e0e8" stroke="#155"/></svg></button>
        </div>
      </div>
      <svg class="model" viewBox="276 281 1013 541" role="img" aria-label="3D 模型">
        <path d="M1053 526v7L640 693h-8z" fill="#5a0f0c"/>
        <g clip-path="url(#hull)">
          <path d="M400 290h760v440H400z" fill="url(#side)"/>
          <path d="M428 632C440 680 490 705 545 705C580 705 605 698 632 687L1054 523C1100 507 1140 482 1145 440" fill="none" stroke="#7c1610" stroke-width="2" opacity=".5"/>
          <path d="M380 600L426 604C432 643 475 671 525 671C570 671 600 647 667 609C720 579 780 550 840 527C900 506 970 488 1040 474C1105 462 1142 441 1140 393C1130 352 1104 331 1060 317L1000 280L500 300Z" fill="url(#face)" filter="url(#soft)"/>
          <path d="M427 606C434 638 475 666 525 666C570 666 600 642 667 604C720 574 780 545 840 522C900 501 970 483 1040 469C1105 457 1140 440 1138 396" fill="none" stroke="url(#rim)" stroke-width="5" filter="url(#soft2)"/>
        </g>
        <path d="M1054 527v4L640 691l-8 1v-3z" fill="#f3281f"/>
        <path d="M1054 531v2L640 694h-6v-2l6-1z" fill="#7a130e"/>
        <path d="M784 488l16-6" stroke="#ff5048"/><circle cx="801" cy="482" r="2" fill="#f84c42"/>
        <path d="M782 475l2 13" stroke="#4be81c" stroke-width="1.300"/><circle cx="782" cy="474.500" r="2.800" fill="#25f51d"/>
        <path d="M784 489l7 10" stroke="#8aeef4" stroke-width="1.300"/><circle cx="791.500" cy="500.500" r="2.600" fill="#20e8f5"/>
      </svg>
    </section>
  </main>

  <footer class="status">
    <button class="sb on" aria-label="切換模型樹"><svg width="16" height="18"><use href="#tree"/></svg></button>
    <button class="sb" aria-label="瀏覽器"><svg width="20" height="20"><use href="#web"/></svg></button>
    <span class="vsep"></span>
    <p class="msg"><i></i>不顯示座標系。</p>
    <span class="vsep far"></span>
    <span class="vsep"></span>
    <svg class="lights" width="26" height="14"><circle cx="6" cy="7" r="5.500" fill="#44d344"/><circle cx="16" cy="7" r="3" fill="#c9c9cb"/><circle cx="23" cy="7" r="3" fill="#c9c9cb"/></svg>
    <span class="vsep"></span>
    <button class="find" aria-label="尋找"><svg width="18" height="16"><path d="M3 0h3v3l2 2h2l2-2V0h3v4l2 4v7h-6V9H7v6H1V8l2-4z" fill="#151515"/><path d="M3 8v6M13 8v6" stroke="#d8dfa8"/><path d="M4 2v2M14 2v2" stroke="#aaa"/></svg></button>
    <span class="vsep"></span>
    <div class="filter"><select aria-label="選取過濾器"><option>智慧型</option></select><span class="arrow"><i class="caret"></i></span></div>
  </footer>
  <span class="orb"></span>
</div>
</body>
</html>
```
FILE: styles.css
```css
* { box-sizing: border-box; }
html, body { height: 100%; margin: 0; }
body {
  padding: 1px;
  background: #555252;
  color: #3a3c42;
  font: 12px/16px "Noto Sans", "Noto Sans CJK TC", sans-serif;
  overflow: hidden;
}
button { margin: 0; padding: 0; border: 0; background: none; color: inherit; font: inherit; }
h1, h2, p, ul { margin: 0; padding: 0; }
svg { display: block; flex: none; }
.defs { position: absolute; width: 0; height: 0; }
.i16 { width: 16px; height: 16px; }
.i18 { width: 18px; height: 18px; }
.i30 { width: 30px; height: 30px; }
.i32 { width: 32px; height: 32px; }
.axisname { font: 7px "DejaVu Sans", sans-serif; fill: #666; }
.axisname.big { font-size: 8px; }
.ab { font: 700 9px "DejaVu Sans Mono", monospace; fill: #444; }

.caret {
  display: inline-block;
  flex: none;
  width: 0;
  height: 0;
  border: 4px solid transparent;
  border-top: 5px solid #3c3e44;
  border-bottom: 0;
}
.caret.up { border-top: 0; border-bottom: 5px solid #3c3e44; }
.caret.dim, :disabled .caret { border-top-color: #a2a3a6; }

.window {
  position: relative;
  display: flex;
  flex-direction: column;
  height: 100%;
  border: 3px solid #979594;
  background: #fbfbfc;
}

/* Title bar */
.titlebar { display: flex; align-items: center; height: 32px; padding: 0 10px 0 11px; }
.quick { display: flex; align-items: center; gap: 8px; }
.quick .vsep { margin: 0 -3px; }
.qb { display: flex; align-items: center; gap: 6px; height: 20px; }
.more { flex-direction: column; justify-content: center; gap: 2px; padding: 0 2px; }
.more::before { content: ""; width: 9px; height: 1px; background: #3c3e44; }
h1 { flex: 1; text-align: center; font: 700 12px/20px "DejaVu Sans", "Noto Sans CJK TC", sans-serif; color: #232428; }
.winbtns { display: flex; gap: 15px; }
.vsep { width: 2px; height: 24px; background: #d3d4d8; border-right: 1px solid #fff; }

/* Ribbon tabs */
.tabs { display: flex; align-items: flex-end; height: 27px; padding: 0 8px 0 4px; }
.tab {
  height: 20px;
  padding: 0 12px;
  border: 1px solid #c9cbcf;
  border-left-width: 0;
  background: #edeef1;
  color: #85878c;
  font-size: 13px;
  line-height: 18px;
  font-weight: 700;
}
.tab.file { display: flex; align-items: center; gap: 4px; margin-right: 8px; padding: 0 8px 0 7px; border-left-width: 1px; color: #4b4d52; }
.tab.file .caret { border-top-color: #6c6e72; border-width: 4px 3px 0; }
.tab.active { position: relative; height: 24px; padding: 0 11px; border: 2px solid #c9cbcf; border-bottom: 0; border-radius: 2px 2px 0 0; background: #fbfbfc; color: #3f4146; z-index: 1; }
.help { display: flex; align-items: center; gap: 8px; height: 30px; margin-left: auto; }
.ask { width: 16px; height: 16px; border-radius: 8px; background: #3f4045; color: #fff; font: 700 13px/16px "Noto Sans", sans-serif; text-align: center; }

/* Ribbon */
.ribbon { display: flex; flex: none; margin: -1px 4px 0; border: 1px solid #c2c5c9; }
.group { display: flex; flex-direction: column; flex: none; border-right: 1px solid #cfd1d5; }
.g-op { width: 121px; }
.g-data { width: 119px; }
.g-datum, .g-eng { width: 151px; }
.g-shape { width: 123px; }
.g-edit { width: 223px; }
.g-surf { width: 127px; }
.g-intent { width: 71px; }
.rest { flex: 1; border-right: 0; }
.tools { display: flex; gap: 3px; height: 77px; padding-top: 2px; white-space: nowrap; }
.tools.inset { padding-left: 7px; }
.tools.center { justify-content: center; }
.big { display: flex; flex-direction: column; align-items: center; gap: 8px; width: 44px; padding-top: 4px; line-height: 13px; }
.big.mid { width: 48px; }
.big.wide { width: 52px; }
.big span .caret { margin-left: 7px; vertical-align: 2px; }
.col { display: flex; flex-direction: column; }
.col.next { margin-left: 5px; }
.sm { display: flex; align-items: center; gap: 3px; height: 24px; }
.sm .caret { margin-left: 5px; }
.sm:disabled { color: #a2a3a6; }
.gname { display: flex; align-items: center; justify-content: center; gap: 6px; height: 22px; border-top: 1px solid #c9cbcf; background: #edeef1; }

/* Work area */
.main { display: flex; flex: 1; min-height: 0; }
.side { display: flex; flex-direction: column; flex: none; width: 272px; padding: 13px 0 11px 4px; }
.sidetabs { display: flex; }
.sidetabs button { display: grid; place-items: center; width: 30px; height: 29px; border: 1px solid #c6c9ce; border-left: 0; border-bottom: 0; background: #edeef1; }
.sidetabs .active { background: #fbfbfc; border-left: 1px solid #c6c9ce; }
.panel { display: flex; flex-direction: column; flex: 1; min-height: 0; border: 1px solid #c6c9ce; border-width: 1px 3px 2px 1px; }
.panelhead { display: flex; align-items: center; gap: 8px; height: 28px; padding: 0 3px 0 20px; }
.panelhead h2 { flex: 1; font-size: 13px; line-height: 20px; font-weight: 700; }
.panelhead button { display: flex; align-items: center; gap: 7px; }
.treebox { display: flex; flex: 1; min-height: 0; border-top: 1px solid #c6c9ce; padding-right: 2px; }
.tree { flex: 1; overflow: hidden; list-style: none; color: #505258; }
.tree li { display: flex; align-items: center; gap: 3px; height: 18px; padding-left: 24px; white-space: nowrap; }
.tree .root { padding-left: 4px; }
.tree .dimrow { color: #bfc1bb; }
.scroll { display: flex; flex-direction: column; width: 17px; border-left: 1px solid #c6c9ce; background: #edeef1; }
.scroll button { display: grid; place-items: center; height: 17px; border: 1px solid #c6c9ce; border-left: 0; background: #f3f4f6; }
.track { flex: 1; }
.thumb { display: grid; place-items: center; height: 42%; border: 1px solid #c6c9ce; border-left: 0; background: linear-gradient(90deg, #fff, #e0e1e5); }
.thumb i { width: 7px; height: 11px; background: repeating-linear-gradient(#aaa 0 1px, #fff 1px 3px); }

.canvas { display: flex; flex-direction: column; flex: 1; min-width: 0; }
.canvastop { display: grid; grid-template-columns: 1fr auto 1fr; align-items: start; padding-top: 7px; }
.notes { padding-left: 3px; color: #111; font: 300 24px/37px "Noto Sans CJK TC", sans-serif; }
.notes p { height: 37px; }
.notes span { font: 400 22px/36px "Noto Sans", sans-serif; }
.notes .ind { padding-left: 49px; }
.viewbar { display: flex; padding: 0 4px; border: 1px solid #c6c9ce; background: #edeef1; }
.viewbar button { position: relative; height: 30px; border-left: 1px solid #c6c9ce; background: #fbfbfc; }
.viewbar button:last-child { border-right: 1px solid #c6c9ce; }
.viewbar .on { background: #e9eaed; box-shadow: inset 0 0 0 1px #a9abb0; }
.viewbar .drop { padding-right: 1px; }
.viewbar .drop::after { content: ""; position: absolute; right: 2px; bottom: 3px; border: 2px solid #444; border-top-color: transparent; border-left-color: transparent; }
.model { flex: 1; width: 100%; min-height: 0; }

/* Status bar */
.status { display: flex; align-items: center; flex: none; height: 44px; padding: 12px 18px 0 6px; border-top: 2px solid #979594; background: #eeeff2; }
.sb { display: grid; place-items: center; width: 22px; height: 22px; margin-right: 4px; border: 1px solid #c6c9ce; }
.sb.on { background: #e4e5e8; border-color: #a4a6aa; }
.status .vsep { flex: none; margin: 0 4px; }
.msg { display: flex; align-items: center; gap: 5px; align-self: flex-start; margin: -6px 0 0 3px; font-size: 11px; }
.msg i { width: 5px; height: 5px; border-radius: 3px; background: #0000f0; }
.status .far { margin-left: auto; margin-right: 30px; }
.lights { margin: 0 -4px 0 -2px; }
.find { display: grid; place-items: center; width: 40px; height: 22px; border: 1px solid #c2c4c9; border-radius: 3px; background: linear-gradient(#fdfdfe, #ecedf0); }
.filter { position: relative; width: 166px; height: 20px; margin-left: 91px; }
.filter select { width: 100%; height: 20px; padding: 0 4px; border: 1px solid #c2c4c9; border-radius: 0; background: linear-gradient(#fdfdfe, #eff0f2); color: #3a3c42; font: inherit; appearance: none; }
.arrow { position: absolute; top: 1px; right: 1px; display: grid; place-items: center; width: 14px; height: 18px; border-left: 1px solid #c2c4c9; pointer-events: none; }
.orb { position: absolute; left: 9px; bottom: -4px; width: 30px; height: 5px; border-radius: 15px 15px 0 0 / 5px 5px 0 0; border: 1px solid #2d5a8c; border-bottom: 0; background: #b4d2ee; }
```
